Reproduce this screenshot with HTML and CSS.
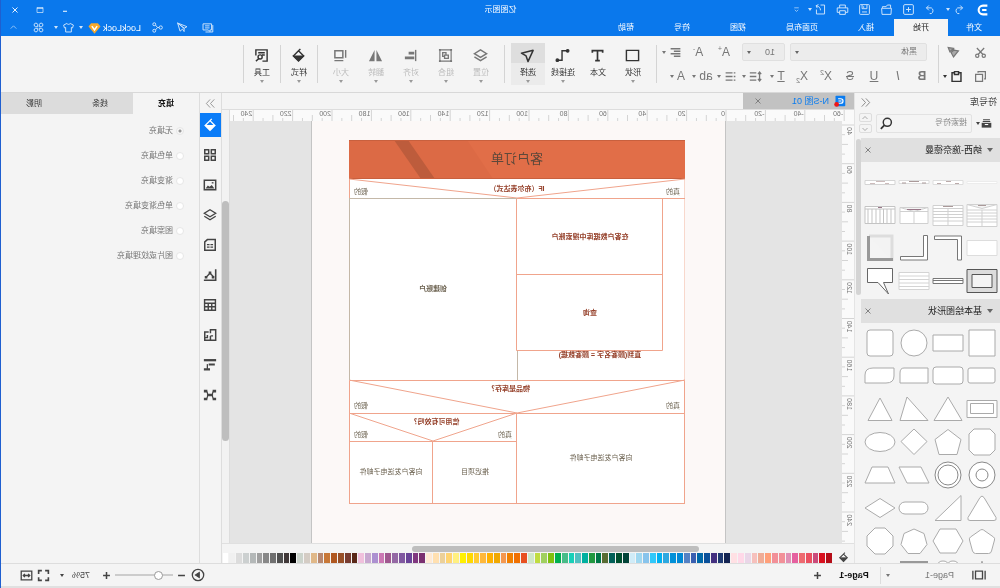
FILE: index.html
```html
<!DOCTYPE html>
<html lang="zh-CN">
<head>
<meta charset="utf-8">
<title>亿图图示</title>
<link rel="stylesheet" href="styles.css">
</head>
<body>
<svg class="sprite" aria-hidden="true">
  <symbol id="undo" viewBox="0 0 16 16"><path d="M6 3 3 6l3 3M3 6h6a4 4 0 0 1 0 7H7"/></symbol>
  <symbol id="redo" viewBox="0 0 16 16"><path d="m10 3 3 3-3 3M13 6H7a4 4 0 0 0 0 7h2"/></symbol>
  <symbol id="new" viewBox="0 0 16 16"><rect x="2" y="2" width="12" height="12" rx="1.500"/><path d="M8 5v6M5 8h6"/></symbol>
  <symbol id="open" viewBox="0 0 16 16"><path d="M3 6V2.500h4L8.500 4.500H13V6M2 6.500h12l-.5 7.500H2.500z"/></symbol>
  <symbol id="save" viewBox="0 0 16 16"><rect x="2" y="2" width="12" height="12" rx="1"/><path d="M5 2.500v4.500h6V2.500M9 4v2M5 11h6"/></symbol>
  <symbol id="print" viewBox="0 0 16 16"><path d="M4.500 6V2.500h7V6M4.500 11.500h-3v-5.500h13v5.500h-3M4.500 9.500h7v4.500h-7z"/></symbol>
  <symbol id="export" viewBox="0 0 16 16"><path d="M8 2.500H3v11h10V8M8 9c0-3 2-5 5-5.500M10.500 2l3 1.300-1.500 3"/></symbol>
  <symbol id="more" viewBox="0 0 16 16"><path d="M4 5h8M5 8.500l3 3 3-3"/></symbol>
  <symbol id="msg" viewBox="0 0 16 16"><path d="M3 3.500h10.500v7.500H7l-2 2v-2H3zM5.500 6h5.500M5.500 8.500h5.500M1.500 5v8.500h9"/></symbol>
  <symbol id="send" viewBox="0 0 16 16"><path d="M14 2.500 2.500 7 6 9zM14 2.500 11 12.500 8 10M6 9v4l2-3M6 9l8-6.500"/></symbol>
  <symbol id="share" viewBox="0 0 16 16"><circle cx="4" cy="8" r="2"/><circle cx="12" cy="4" r="1.800"/><circle cx="12" cy="12" r="1.800"/><path d="M6 8h2l2.500-3M8 8l2.500 3"/></symbol>
  <symbol id="shirt" viewBox="0 0 16 16"><path d="M6 3 2 5l1 3.500 1.500-.5v5.500h7V8l1.500.5L14 5l-4-2c-1 1.500-3 1.500-4 0z"/></symbol>
  <symbol id="apps" viewBox="0 0 16 16"><path d="M7 7H4.500A2.200 2.200 0 1 1 7 4.500zM9 7V4.500A2.200 2.200 0 1 1 11.500 7zM7 9v2.500A2.200 2.200 0 1 1 4.500 9zM9 9h2.500A2.200 2.200 0 1 1 9 11.500z"/></symbol>
  <symbol id="up" viewBox="0 0 16 16"><path d="m3 10 5-5 5 5"/></symbol>
  <symbol id="down" viewBox="0 0 16 16"><path d="m3 6 5 5 5-5"/></symbol>
  <symbol id="close" viewBox="0 0 16 16"><path d="m3 3 10 10M13 3 3 13" stroke-width="1.800"/></symbol>
  <symbol id="max" viewBox="0 0 16 16"><path d="M2 3h12v10H2zM2 5h12"/></symbol>
  <symbol id="min" viewBox="0 0 16 16"><path d="M4 10.500h8" stroke-width="2"/></symbol>
  <symbol id="cut" viewBox="0 0 16 16"><g stroke-width="1.500"><circle cx="4" cy="12" r="2"/><circle cx="12" cy="12" r="2"/><path d="M3.500 2.500 11 10.500M12.500 2.500 5 10.500"/></g></symbol>
  <symbol id="copy" viewBox="0 0 16 16"><path d="M5.500 5.500h8.500V14H5.500zM3.500 11H2V2h9v1.500" stroke-width="1.500"/></symbol>
  <symbol id="painter" viewBox="0 0 16 16"><path d="m8 3 6.500-1-2 5zM7 4l4.500 4.500M7.500 5 2 6l6 7.500 3-5.500z" fill="currentColor" fill-opacity=".6" stroke-width="1.500"/></symbol>
  <symbol id="paste" viewBox="0 0 16 16"><path d="M5 3.500H2.500V14h11V3.500H11M5.500 2h5v3.500h-5z" stroke-width="1.800"/></symbol>
  <symbol id="align" viewBox="0 0 16 16"><path d="M2 3.500h12M2 6.500h8M2 9.500h12M2 12.500h8" stroke-width="1.800"/></symbol>
  <symbol id="spacing" viewBox="0 0 16 16"><path d="M7 3.500h8M7 8h8M7 12.500h8M3 2.500v11M1 5l2-2.500L5 5M1 11l2 2.500L5 11" stroke-width="1.600"/></symbol>
  <symbol id="list" viewBox="0 0 16 16"><path d="M2 3.500h2M2 8h2M2 12.500h2M5.500 3.500H14M5.500 8H14M5.500 12.500H14" stroke-width="1.600"/></symbol>
  <symbol id="rect" viewBox="0 0 16 16"><path d="M1.500 2.500h13v11h-13z" stroke-width="1.500"/></symbol>
  <symbol id="text" viewBox="0 0 16 16"><path d="M2.500 5V2.800h11V5M8 3v10.500M5.500 13.500h5" stroke-width="1.800"/></symbol>
  <symbol id="connector" viewBox="0 0 16 16"><path d="M3 3h5.500v10H12" stroke-width="1.500"/><circle cx="2.500" cy="3" r="1.400" fill="currentColor"/><circle cx="13.500" cy="13" r="1.400" fill="currentColor"/></symbol>
  <symbol id="pointer" viewBox="0 0 16 16"><path d="M2 2.500 14.500 5.500 9.500 8.500 7.500 14.500z" stroke-width="1.600" stroke-linejoin="round"/></symbol>
  <symbol id="layers" viewBox="0 0 16 16"><path d="M8 2 1.500 6 8 10l6.500-4zM1.500 9.500l6.500 4 6.500-4" stroke-width="1.500"/></symbol>
  <symbol id="group" viewBox="0 0 16 16"><path d="M2 2h12v12H2z"/><path d="M5 7.500h4V11H5zM7.500 7.500V5H11v4H9" stroke-width="1.400"/><path d="M1 1h2v2H1zM13 1h2v2h-2zM1 13h2v2H1zM13 13h2v2h-2z" fill="currentColor" stroke="none"/></symbol>
  <symbol id="alignobj" viewBox="0 0 16 16"><path d="M2.500 2v12" stroke-width="1.500"/><path d="M4 4h6v3H4zM4 9h10v3H4z" fill="currentColor" stroke="none"/></symbol>
  <symbol id="flip" viewBox="0 0 16 16"><path d="M7 2v12H1zM9 2v12h6z" fill="currentColor" stroke="none"/></symbol>
  <symbol id="size" viewBox="0 0 16 16"><path d="M5.500 3H14v7.500H5.500z" stroke-width="1.600"/><path d="M2.500 2v8.500M5 13.500h9.500" stroke-width="1.500"/></symbol>
  <symbol id="bucket" viewBox="0 0 16 16"><path d="M8 3 2.500 8.500 8 14l5.500-5.500L8 3 6 1" stroke-width="1.500"/><path d="M3 8.500h10l-5 5z" fill="currentColor"/></symbol>
  <symbol id="tools" viewBox="0 0 16 16"><path d="M14 8V2H2v12h5M4.500 5h7M4.500 7.500h3" stroke-width="1.500"/><circle cx="9.500" cy="9.500" r="2.200" stroke-width="1.500"/><path d="m11 11.500 3 2.500" stroke-width="1.500"/></symbol>
  <symbol id="collapse" viewBox="0 0 16 16"><path d="M7.500 2 2 8l5.500 6M13.500 2 8 8l5.500 6"/></symbol>
  <symbol id="expand" viewBox="0 0 16 16"><path d="m2.500 2 5.500 6-5.500 6M8.500 2l5.500 6-5.500 6"/></symbol>
  <symbol id="drawer" viewBox="0 0 16 16"><path d="M3 2.500h10M2.500 5h11" stroke-width="1.500"/><path d="M1 7h14v7H1z" fill="currentColor" stroke="none"/><path d="M5.500 9.500h5" stroke="#fff" stroke-width="1.500"/></symbol>
  <symbol id="search" viewBox="0 0 16 16"><circle cx="7" cy="6.500" r="5" stroke-width="1.800"/><path d="m10.500 10 4.500 4.500" stroke-width="2.200"/></symbol>
  <symbol id="blocks" viewBox="0 0 16 16"><path d="M2 2h4.500v4.500H2zM9.500 2H14v4.500H9.500zM2 9.500h4.500V14H2zM9.500 9.500H14V14H9.500z" stroke-width="1.700"/></symbol>
  <symbol id="image" viewBox="0 0 16 16"><path d="M1.500 2.500h13v11h-13z" stroke-width="1.700"/><path d="m3 12 3-4 2.500 2 2-1.500L13 12z" fill="currentColor" stroke="none"/><path d="M4 5.500h2" stroke-width="1.500"/></symbol>
  <symbol id="note" viewBox="0 0 16 16"><path d="M2 1.800h9L14 4.500V14H2z" stroke-width="1.700"/><path d="M4.500 7.500h3M8.500 7.500h3M4.500 10.500h3M8.500 10.500h3" stroke-width="1.500"/></symbol>
  <symbol id="chart" viewBox="0 0 16 16"><path d="M1.500 1.500v12.500H15" stroke-width="1.800"/><path d="m4 10 4-4 4 4" stroke-width="1.500"/><path d="M6.500 4h3v3h-3zM3 9h3v3H3zM11 9h3v3h-3z" fill="currentColor" stroke="none"/></symbol>
  <symbol id="table" viewBox="0 0 16 16"><path d="M1.800 2h12.400v12H1.800zM1.800 6h12.400M1.800 10h12.400M6 6v8M10 6v8" stroke-width="1.600"/></symbol>
  <symbol id="plan" viewBox="0 0 16 16"><path d="M7.500 6V2H1.500v12H14V4.500H9.500M7.500 9v5M7.500 9H4.500M11 8v3h3" stroke-width="1.700"/></symbol>
  <symbol id="gantt" viewBox="0 0 16 16"><path d="M1 2.500h14" stroke-width="2.600"/><path d="M2.500 7.500h7M8 13h7" stroke-width="2.400"/><path d="M11 7v5.500" stroke-width="1.500"/></symbol>
  <symbol id="mind" viewBox="0 0 16 16"><path d="M3 3.500c3 0 3 9 0 9M13 3.500c-3 0-3 9 0 9M5 8h6" stroke-width="1.400"/><path d="M5.500 6.500h5v3h-5zM1 2h4v3H1zM11 2h4v3h-4zM1 11h4v3H1zM11 11h4v3h-4z" fill="currentColor" stroke="none"/></symbol>
  <symbol id="view" viewBox="0 0 16 16"><path d="M4 3.500h8v9H4zM1 3v10M15 3v10" stroke-width="1.500"/></symbol>
  <symbol id="play" viewBox="0 0 16 16"><circle cx="8" cy="8" r="6.500" stroke-width="1.500"/><path d="m6.500 5 4.500 3-4.500 3z" fill="currentColor"/></symbol>
  <symbol id="plus" viewBox="0 0 16 16"><path d="M8 3v10M3 8h10" stroke-width="2.200"/></symbol>
  <symbol id="minus" viewBox="0 0 16 16"><path d="M3 8h10" stroke-width="2.200"/></symbol>
  <symbol id="full" viewBox="0 0 16 16"><path d="M2 6V2h4M10 2h4v4M14 10v4h-4M6 14H2v-4" stroke-width="2"/></symbol>
  <symbol id="fit" viewBox="0 0 16 16"><path d="M1.500 2.500h13v11h-13zM4 8h8M6 6 4 8l2 2M10 6l2 2-2 2" stroke-width="1.600"/></symbol>
</svg>

<div class="app">
  <header class="titlebar">
    <nav class="quick" aria-label="快速访问">
      <svg class="logo" viewBox="0 0 16 16"><path d="M3 3h5a5 5 0 0 1 0 10H3M4 8h5" fill="none" stroke="#fff" stroke-width="2.400"/></svg>
      <button class="quick-btn split" aria-label="撤销"><svg class="icon"><use href="#undo"/></svg><i class="caret"></i></button>
      <button class="quick-btn" aria-label="恢复"><svg class="icon"><use href="#redo"/></svg></button>
      <button class="quick-btn" aria-label="新建"><svg class="icon"><use href="#new"/></svg></button>
      <button class="quick-btn" aria-label="打开"><svg class="icon"><use href="#open"/></svg></button>
      <button class="quick-btn" aria-label="保存"><svg class="icon"><use href="#save"/></svg></button>
      <button class="quick-btn" aria-label="打印"><svg class="icon"><use href="#print"/></svg></button>
      <button class="quick-btn split" aria-label="导出"><svg class="icon"><use href="#export"/></svg><i class="caret"></i></button>
      <button class="quick-btn slim" aria-label="更多"><svg class="icon small"><use href="#more"/></svg></button>
    </nav>
    <h1 class="app-title">亿图图示</h1>
    <div class="window-controls">
      <button class="win-btn" aria-label="最小化"><svg class="icon small"><use href="#min"/></svg></button>
      <button class="win-btn" aria-label="最大化"><svg class="icon small"><use href="#max"/></svg></button>
      <button class="win-btn" aria-label="关闭"><svg class="icon small"><use href="#close"/></svg></button>
    </div>
  </header>

  <div class="menubar">
    <nav class="menu" aria-label="菜单">
      <button class="menu-tab file">文件</button>
      <button class="menu-tab active">开始</button>
      <button class="menu-tab">插入</button>
      <button class="menu-tab">页面布局</button>
      <button class="menu-tab">视图</button>
      <button class="menu-tab">符号</button>
      <button class="menu-tab">帮助</button>
    </nav>
    <div class="account">
      <button class="acct-btn" aria-label="消息"><svg class="icon"><use href="#msg"/></svg></button>
      <button class="acct-btn" aria-label="发送"><svg class="icon"><use href="#send"/></svg></button>
      <button class="acct-btn" aria-label="分享"><svg class="icon"><use href="#share"/></svg></button>
      <button class="user">LockLock<svg class="gem" viewBox="0 0 16 16"><path d="M3.500 1.500h9L16 6l-8 9.500L0 6z" fill="#f7a92c"/><path d="m4.500 5.500 3.500 5 3.500-5" fill="none" stroke="#fff" stroke-width="2"/></svg><i class="caret"></i></button>
      <button class="acct-btn split" aria-label="皮肤"><svg class="icon"><use href="#shirt"/></svg><i class="caret"></i></button>
      <button class="acct-btn" aria-label="应用"><svg class="icon"><use href="#apps"/></svg></button>
      <button class="acct-btn" aria-label="收起功能区"><svg class="icon small"><use href="#up"/></svg></button>
    </div>
  </div>

  <section class="ribbon" aria-label="开始">
    <div class="clipboard">
      <button class="tool" aria-label="剪切"><svg class="icon mid"><use href="#cut"/></svg></button>
      <button class="tool split" aria-label="格式刷"><svg class="icon mid"><use href="#painter"/></svg></button>
      <button class="tool" aria-label="复制"><svg class="icon mid"><use href="#copy"/></svg></button>
      <button class="tool split dark" aria-label="粘贴"><svg class="icon mid"><use href="#paste"/></svg><i class="caret"></i></button>
    </div>
    <span class="sep"></span>
    <div class="font-group">
      <div class="tool-row fields">
        <label class="field family"><select aria-label="字体"><option>黑体</option></select><i class="caret"></i></label>
        <label class="field points"><select aria-label="字号"><option>10</option></select><i class="caret"></i></label>
        <button class="tool wide glyph" aria-label="增大字号">A<sup>+</sup></button>
        <button class="tool wide glyph" aria-label="减小字号">A<sup>-</sup></button>
        <button class="tool split" aria-label="对齐方式"><svg class="icon mid"><use href="#align"/></svg><i class="caret"></i></button>
      </div>
      <div class="tool-row">
        <button class="tool glyph"><b>B</b></button>
        <button class="tool glyph"><em>I</em></button>
        <button class="tool glyph"><u>U</u></button>
        <button class="tool glyph"><s>S</s></button>
        <button class="tool glyph" aria-label="上标">X<sup>2</sup></button>
        <button class="tool glyph" aria-label="下标">X<sub>2</sub></button>
        <button class="tool split glyph"><u>T</u><i class="caret"></i></button>
        <button class="tool split" aria-label="行距"><svg class="icon mid"><use href="#spacing"/></svg><i class="caret"></i></button>
        <button class="tool split" aria-label="列表"><svg class="icon mid"><use href="#list"/></svg><i class="caret"></i></button>
        <button class="tool split glyph">ab<i class="caret"></i></button>
        <button class="tool split glyph">A<i class="caret"></i></button>
      </div>
    </div>
    <span class="sep"></span>
    <div class="big-group">
      <button class="big"><svg class="icon"><use href="#rect"/></svg><span>形状</span><i class="caret"></i></button>
      <button class="big"><svg class="icon"><use href="#text"/></svg><span>文本</span></button>
      <button class="big"><svg class="icon"><use href="#connector"/></svg><span>连接线</span><i class="caret"></i></button>
      <button class="big selected"><svg class="icon"><use href="#pointer"/></svg><span>选择</span><i class="caret"></i></button>
    </div>
    <span class="sep"></span>
    <div class="big-group">
      <button class="big off"><svg class="icon"><use href="#layers"/></svg><span>位置</span><i class="caret"></i></button>
      <button class="big off"><svg class="icon"><use href="#group"/></svg><span>组合</span><i class="caret"></i></button>
      <button class="big off"><svg class="icon"><use href="#alignobj"/></svg><span>对齐</span><i class="caret"></i></button>
      <button class="big off"><svg class="icon"><use href="#flip"/></svg><span>翻转</span><i class="caret"></i></button>
      <button class="big off"><svg class="icon"><use href="#size"/></svg><span>大小</span><i class="caret"></i></button>
    </div>
    <span class="sep"></span>
    <button class="big single"><svg class="icon"><use href="#bucket"/></svg><span>样式</span><i class="caret"></i></button>
    <span class="sep"></span>
    <button class="big single"><svg class="icon"><use href="#tools"/></svg><span>工具</span><i class="caret"></i></button>
    <span class="sep"></span>
  </section>

  <main class="workspace">
    <aside class="library">
      <div class="library-head"><h2>符号库</h2><button aria-label="收起"><svg class="icon small"><use href="#collapse"/></svg></button></div>
      <div class="library-search">
        <button class="drawer" aria-label="符号库菜单"><svg class="icon small"><use href="#drawer"/></svg><i class="caret"></i></button>
        <label class="search-box"><input type="text" placeholder="搜索符号" aria-label="搜索符号"><svg class="icon mid"><use href="#search"/></svg></label>
        <div class="stepper"><button aria-label="上一个"><svg class="icon tiny"><use href="#up"/></svg></button><button aria-label="下一个"><svg class="icon tiny"><use href="#down"/></svg></button></div>
      </div>
      <div class="library-body">
        <div class="stencils">
          <h3 class="stencil-head"><i class="caret"></i><span>纳西-施奈德曼</span><button aria-label="关闭"><svg class="icon tiny"><use href="#close"/></svg></button></h3>
          <div class="shapes ns">
            <svg viewBox="0 0 32 32"><path d="M1 15.500h30v2H1z" stroke="#ececec"/></svg>
            <svg viewBox="0 0 32 32"><path d="M1 14.500h30v4H1z" stroke="#ddd"/><path d="M13 15.500h5M5 17.500h4M23 17.500h4" stroke="#baa"/></svg>
            <svg viewBox="0 0 32 32"><path d="M1 14.500h30v3H1z" stroke="#ddd"/><path d="M11 15.500h10M4 17h4M24 17h4" stroke="#a99"/></svg>
            <svg viewBox="0 0 32 32"><path d="M1 14.500h30v4H1z" stroke="#d4d4d4"/><path d="M11 15.500h9M7 17.500h4M21 17.500h5" stroke="#cbb"/></svg>
            <svg viewBox="0 0 32 32"><path d="M1 5.500h30v22H1zM1 11h30M1 14h30M1 17h30M1 20h30M1 23h30M16 11v16M1 5.500l15 4 15-4" stroke="#d0d0d0"/><path d="M12 6.500h8" stroke="#a99"/></svg>
            <svg viewBox="0 0 32 32"><path d="M1 6.500h30v20H1zM1 9.500h30M1 12.500h30M1 15.500h30M1 18.500h30M1 22h30M16 9v17" stroke="#d0d0d0"/><path d="M11 7.500h10" stroke="#a99"/></svg>
            <svg viewBox="0 0 32 32"><path d="M2 8.500h28v16H2zM2 12.500h28M2 8.500l14 4 14-4M16 12.500v12" stroke="#d0d0d0"/><path d="M9 10.500h14" stroke="#978"/></svg>
            <svg viewBox="0 0 32 32"><path d="M1 7.500h30v17H1zM1 10h30M5 10v14M9 10v14M12.500 10v14M16 10v14M20 10v14M24 10v14M28 10v14" stroke="#c4c4c4"/><path d="M14 8.500h4" stroke="#978"/></svg>
            <svg viewBox="0 0 32 32"><path d="M1 8.500h30v15H1z" stroke="#ddd"/></svg>
            <svg viewBox="0 0 32 32"><path d="M2.500 4h27v3.500h-23V28h-4z" stroke="#777"/></svg>
            <svg viewBox="0 0 32 32"><path d="M2.500 3.500h4v21h23V28h-27z" stroke="#777"/></svg>
            <svg viewBox="0 0 32 32"><path d="M4 29V4h23" fill="#f3f3f3" stroke="#ddd" stroke-width="3"/><path d="M3 27.500h24.500V4" fill="none" stroke="#999" stroke-width="3"/></svg>
            <svg viewBox="0 0 32 32"><path d="M1 4.500h30v23H1z" fill="#dcdcdc" stroke="#555"/><path d="M6 9.500h20v13H6z" fill="#f4f4f4" stroke="#555"/></svg>
            <svg viewBox="0 0 32 32"><path d="M1 13.500h30v5H1zM1 15.500h30" stroke="#777"/></svg>
            <svg viewBox="0 0 32 32"><path d="M1 7.500h30v17H1zM1 11h30M1 14.500h30M1 18h30M1 21.500h30" stroke="#d4d4d4"/></svg>
            <svg viewBox="0 0 32 32"><path d="M3.500 3.500h25v14H18L7.500 29l5-11.500h-9z" stroke="#666"/></svg>
          </div>
          <h3 class="stencil-head"><i class="caret"></i><span>基本绘图形状</span><button aria-label="关闭"><svg class="icon tiny"><use href="#close"/></svg></button></h3>
          <div class="shapes">
            <svg viewBox="0 0 32 32"><path d="M3 3h26v26H3z"/></svg>
            <svg viewBox="0 0 32 32"><path d="M1 8h30v16H1z"/></svg>
            <svg viewBox="0 0 32 32"><circle cx="16" cy="16" r="13"/></svg>
            <svg viewBox="0 0 32 32"><rect x="3" y="3" width="26" height="26" rx="3"/></svg>
            <svg viewBox="0 0 32 32"><rect x="3" y="8" width="27" height="15" rx="2"/></svg>
            <svg viewBox="0 0 32 32"><rect x="1" y="7" width="30" height="17" rx="3"/></svg>
            <svg viewBox="0 0 32 32"><path d="M2 8h24q4 0 4 5v10H2z"/></svg>
            <svg viewBox="0 0 32 32"><path d="M2 13q0 0 0-5h21q7 0 8 6v10H9q-7 0-7-6z" visibility="hidden"/><path d="M2 8h21q8 0 8 7v8H10q-8 0-8-7z"/></svg>
            <svg viewBox="0 0 32 32"><path d="M1 7.500h30v17H1zM4.500 10.500h23v10h-23z"/></svg>
            <svg viewBox="0 0 32 32"><path d="m16 4 14 23.500H2z"/></svg>
            <svg viewBox="0 0 32 32"><path d="m23 4 7 23.500H2z"/></svg>
            <svg viewBox="0 0 32 32"><path d="m16 5 12 22.500H4z"/></svg>
            <svg viewBox="0 0 32 32"><path d="M8 3h16l5 5v16l-5 5H8l-5-5V8z"/></svg>
            <svg viewBox="0 0 32 32"><path d="m16 3.500 13 10-4 15H7l-4-15z"/></svg>
            <svg viewBox="0 0 32 32"><path d="m16 3 13 12.500L16 28.500 3 15.500z"/></svg>
            <svg viewBox="0 0 32 32"><ellipse cx="16" cy="16" rx="15" ry="9.500"/></svg>
            <svg viewBox="0 0 32 32" class="bold"><circle cx="16" cy="16" r="13"/><circle cx="16" cy="16" r="6"/></svg>
            <svg viewBox="0 0 32 32" class="bold"><circle cx="16" cy="16" r="13"/><circle cx="16" cy="16" r="10"/></svg>
            <svg viewBox="0 0 32 32"><path d="M9 8h22l-8 16H1z"/></svg>
            <svg viewBox="0 0 32 32"><path d="M8 8h16l7 16H1z"/></svg>
            <svg viewBox="0 0 32 32"><path d="M14 5.500q2-3 4 0l12 20q1 3-2 3H4q-3 0-2-3z"/></svg>
            <svg viewBox="0 0 32 32"><path d="M3 3.500v25h26z"/></svg>
            <svg viewBox="0 0 32 32"><rect x="2" y="10" width="29" height="12" rx="6"/></svg>
            <svg viewBox="0 0 32 32"><path d="m16 6.500 15 9.500-15 9.500L1 16z"/></svg>
            <svg viewBox="0 0 32 32"><path d="M14.500 5q1.500-1 3 0l10 7q1.500 1 1 3l-3 11q-1 2.500-3 2.500H9.500Q7 28.500 6.500 26l-3-11q-.5-2 1-3z"/></svg>
            <svg viewBox="0 0 32 32"><path d="M8 4h16l7 12-7 12H8L1 16z"/></svg>
            <svg viewBox="0 0 32 32"><path d="m16 4 10 4.500 3 11-7 9H10l-7-9 3-11z"/></svg>
            <svg viewBox="0 0 32 32"><path d="M11 3h10l8 8v10l-8 8H11l-8-8V11z"/></svg>
            <svg viewBox="0 0 32 32"><path d="m16 3 3 9h10l-8 6 3 10-8-6-8 6 3-10-8-6h10z"/></svg>
            <svg viewBox="0 0 32 32"><path d="M6 28V7q0-4 5-4t5 4q0-4 5-4t5 4v21z"/></svg>
            <svg viewBox="0 0 32 32"><path d="M3 4h26v24H3z" stroke="#999" stroke-width="2"/></svg>
          </div>
        </div>
        <div class="thumb-track"><span class="library-thumb"></span></div>
      </div>
    </aside>

    <section class="editor">
      <div class="doc-tabs">
        <div class="doc-tab">
          <svg class="doc-icon" viewBox="0 0 16 16"><rect x="1" y="1" width="13" height="14" rx="1" fill="#0a7cf0"/><path d="M10.500 5H7a3 3 0 0 0 0 6h3.500M6 8h4" fill="none" stroke="#fff" stroke-width="1.600"/><circle cx="12.500" cy="12.500" r="3.200" fill="#f01818"/></svg>
          <button class="doc-name">N-S图 01</button>
          <button class="doc-close" aria-label="关闭文档"><svg class="icon tiny"><use href="#close"/></svg></button>
        </div>
      </div>
      <div class="stage">
        <svg class="ruler-x" id="rulerX"></svg>
        <svg class="ruler-y" id="rulerY"></svg>
        <div class="canvas">
          <div class="paper">
            <svg class="diagram" width="337" height="365" viewBox="0 0 337 365" role="img" aria-label="客户订单">
              <path d="M0 0h336v364H0z" fill="#fff"/>
              <path d="M0 0h336v39H0z" fill="#e16e48"/>
              <path d="M218 0h118v39H192z" fill="#dc6a45"/>
              <path d="M277 0h14l-27 39h-14z" fill="#bd5c3c"/>
              <path d="M0 .5h336M0 38.500h336" stroke="#c8603e" fill="none"/>
              <g fill="none" stroke="#f0a48c">
                <path d="M.5 39v201M335.500 273v90" stroke="#f8d8cc"/>
                <path d="M335.500 39v20M0 39l168 19 168-19M0 58.500h168M22.500 58.500H168.500v152H22.500zM22.500 134.500h146"/>
                <path d="M.5 240.500h335v33H.5zM0 240l168 33 168-33M168.500 273.500h167v28h-167zM168 273l84 28 84-28M.5 273v90M168.500 301v62M252.500 301v62M335.500 301v62M0 363.500h336"/>
                <path d="M168 58.500h168M335.500 58v182M167.500 211v29" stroke="#c4b8a8"/>
              </g>
              <text class="d-title" x="168" y="23">客户订单</text>
              <g class="d-strong">
                <text x="168" y="51">IF（布尔表达式）</text>
                <text x="95" y="99">在客户数据库中搜索账户</text>
                <text x="95" y="175">查询</text>
                <text x="85" y="217">直到(顾客名字 = 顾客数据)</text>
                <text x="176" y="251">物品是库存？</text>
                <text x="250" y="284">信用可有效吗？</text>
              </g>
              <g class="d-text">
                <text x="12" y="54">真的</text>
                <text x="324" y="54">假的</text>
                <text x="252" y="151" class="d-mid">创建账户</text>
                <text x="12" y="268">真的</text>
                <text x="324" y="268">假的</text>
                <text x="180" y="297">真的</text>
                <text x="324" y="297">假的</text>
                <text x="84" y="320">向客户发送电子邮件</text>
                <text x="210" y="334">推迟项目</text>
                <text x="294" y="334">向客户发送电子邮件</text>
              </g>
            </svg>
          </div>
        </div>
        <div class="scroll-y"><span></span></div>
      </div>
      <div class="scroll-x"><span></span></div>
      <div class="palette"><svg class="icon small"><use href="#bucket"/></svg><div class="swatches" id="swatches"></div></div>
    </section>

    <nav class="side-tools" aria-label="侧边栏">
      <button class="fold" aria-label="展开"><svg class="icon small"><use href="#expand"/></svg></button>
      <button class="on" aria-label="填充"><svg class="icon"><use href="#bucket"/></svg></button>
      <button aria-label="符号"><svg class="icon"><use href="#blocks"/></svg></button>
      <button aria-label="图片"><svg class="icon"><use href="#image"/></svg></button>
      <button aria-label="图层"><svg class="icon"><use href="#layers"/></svg></button>
      <button aria-label="注释"><svg class="icon"><use href="#note"/></svg></button>
      <button aria-label="图表"><svg class="icon"><use href="#chart"/></svg></button>
      <button aria-label="表格"><svg class="icon"><use href="#table"/></svg></button>
      <button aria-label="平面图"><svg class="icon"><use href="#plan"/></svg></button>
      <button aria-label="甘特图"><svg class="icon"><use href="#gantt"/></svg></button>
      <button aria-label="思维导图"><svg class="icon"><use href="#mind"/></svg></button>
    </nav>

    <aside class="props">
      <div class="prop-tabs"><button class="active">填充</button><button>线条</button><button>阴影</button></div>
      <form class="fills">
        <label><input type="radio" name="fill" checked>无填充</label>
        <label><input type="radio" name="fill">单色填充</label>
        <label><input type="radio" name="fill">渐变填充</label>
        <label><input type="radio" name="fill">单色渐变填充</label>
        <label><input type="radio" name="fill">图案填充</label>
        <label><input type="radio" name="fill">图片或纹理填充</label>
      </form>
    </aside>
  </main>

  <footer class="statusbar">
    <button class="view" aria-label="页面视图"><svg class="icon"><use href="#view"/></svg></button>
    <label class="page-pick"><select aria-label="页面"><option>Page-1</option></select><i class="caret"></i></label>
    <button class="page-tab">Page-1</button>
    <button class="add" aria-label="添加页面"><svg class="icon small"><use href="#plus"/></svg></button>
    <div class="zoom">
      <button aria-label="播放"><svg class="icon"><use href="#play"/></svg></button>
      <button aria-label="缩小"><svg class="icon small"><use href="#minus"/></svg></button>
      <input type="range" min="0" max="100" value="20" aria-label="缩放">
      <button aria-label="放大"><svg class="icon small"><use href="#plus"/></svg></button>
      <button class="percent">75%<i class="caret"></i></button>
      <button aria-label="全屏"><svg class="icon mid"><use href="#full"/></svg></button>
      <button aria-label="适合宽度"><svg class="icon mid"><use href="#fit"/></svg></button>
    </div>
  </footer>
</div>
<script src="app.js"></script>
</body>
</html>
```

FILE: styles.css
```css
* { box-sizing: border-box; }

body {
  margin: 0;
  background: #f4f4f4;
  color: #333;
  font: 8px/12px "Liberation Sans", "Noto Sans CJK SC", sans-serif;
}

button, input, select { font: inherit; color: inherit; margin: 0; }
button { padding: 0; border: 0; background: none; display: flex; align-items: center; justify-content: center; }
h1, h2, h3 { margin: 0; font: inherit; }

.sprite { position: absolute; width: 0; height: 0; }

/* The whole interface is shown as a mirror image. */
.app {
  display: flex;
  flex-direction: column;
  height: 100vh;
  min-height: 480px;
  overflow: hidden;
  border-right: 1px solid #1f5fd0;
  transform: scaleX(-1);
}

.icon { width: 14px; height: 14px; flex: none; fill: none; stroke: currentColor; stroke-width: 1.2; }
.icon.mid { width: 13px; height: 13px; }
.icon.small { width: 11px; height: 11px; }
.icon.tiny { width: 8px; height: 8px; }
.caret { flex: none; border: 2px solid transparent; border-top: 3px solid currentColor; border-bottom: 0; }

/* Title bar */
.titlebar, .menubar { display: flex; background: #0a78ec; color: #fff; flex: none; }
.titlebar { display: grid; grid-template-columns: 1fr auto 1fr; height: 19px; }
.quick, .window-controls, .account, .menu { display: flex; align-items: center; }
.quick .icon, .account .icon { width: 13px; height: 13px; opacity: .8; }
.quick .icon.small, .account .icon.small { width: 9px; height: 9px; }
.logo { width: 14px; height: 14px; margin: 0 6px 0 10px; }
.quick-btn { width: 22px; height: 18px; }
.quick-btn.split { width: 28px; gap: 2px; }
.quick-btn.slim { width: 14px; }
.quick .caret, .account .caret { opacity: .8; }
.app-title { line-height: 19px; }
.window-controls { justify-content: flex-end; padding-right: 2px; }
.win-btn { width: 25px; height: 18px; }
.win-btn .icon { width: 8px; height: 8px; }

.menubar { height: 17px; justify-content: space-between; }
.menu-tab { height: 17px; padding: 0 20px; }
.menu-tab.file { padding: 0 18px; }
.menu-tab.active { padding: 0 19px; background: #f4f4f4; color: #222; }
.acct-btn { width: 25px; height: 16px; }
.acct-btn.split { width: 28px; gap: 4px; }
.user { gap: 2px; font-size: 9px; padding-left: 4px; }
.gem { width: 13px; height: 12px; }
.user .caret { margin-left: 3px; }

/* Ribbon */
.ribbon {
  display: flex;
  align-items: center;
  flex: none;
  height: 57px;
  border-bottom: 1px solid #d8d8d8;
  background: #f4f4f4;
}
.sep { width: 1px; height: 38px; background: #d4d4d4; flex: none; }
.clipboard { display: grid; grid-template-columns: 30px 27px; padding-left: 4px; color: #777; }
.tool { height: 24px; width: 24px; }
.clipboard .tool { width: auto; }
.tool.wide { width: 26px; }
.tool.split { width: 25px; gap: 3px; color: #777; }
.tool.split.dark { color: #333; }
.font-group { width: 281px; color: #777; }
.tool-row { display: flex; align-items: center; height: 24px; padding-left: 4px; }
.tool-row.fields { padding-left: 11px; }
.glyph { font-size: 12px; line-height: 14px; }
.glyph sup, .glyph sub { font-size: 7px; line-height: 7px; }
.glyph sup { align-self: flex-start; margin-top: 5px; }
.glyph sub { align-self: flex-end; margin-bottom: 4px; }
.field { position: relative; display: flex; align-items: center; margin-right: 5px; height: 18px; border: 1px solid #e0e0e0; border-radius: 2px; background: #ececec; }
.field.family { width: 137px; }
.field.points { width: 43px; font-size: 9px; }
.field select, .page-pick select { appearance: none; width: 100%; border: 0; background: none; outline: 0; }
.field select { padding: 0 9px; height: 16px; }
.field .caret { position: absolute; right: 4px; color: #666; }

.big-group { display: flex; gap: 1px; padding: 0 6px; }
.big { flex-direction: column; justify-content: flex-start; width: 34px; height: 42px; padding-top: 5px; color: #333; }
.big .icon { width: 15px; height: 15px; }
.big span { margin-top: 4px; white-space: nowrap; }
.big .caret { color: #999; margin-top: 1px; }
.big.off { color: #bbb; }
.big.off .icon { color: #777; }
.big.single { width: 36px; }
.big.selected { background: linear-gradient(#dedede 20px, #ebebeb 20px); }

/* Workspace */
.workspace { display: grid; grid-template-columns: 146px 1fr 23px 198px; flex: 1; min-height: 0; }

.library { display: flex; flex-direction: column; min-height: 0; background: #f4f4f4; border-right: 1px solid #e4e4e4; }
.library-head { display: flex; justify-content: space-between; align-items: center; height: 18px; padding: 0 5px 0 3px; font-size: 9px; color: #444; }
.library-head .icon { color: #777; }
.library-search { display: flex; align-items: center; gap: 4px; padding: 1px 4px 4px 8px; height: 27px; }
.drawer { gap: 1px; width: 16px; color: #444; }
.search-box { display: flex; align-items: center; flex: 1; min-width: 0; height: 19px; padding: 0 3px 0 4px; border: 1px solid #e2e2e2; border-radius: 2px; color: #333; }
.search-box input { width: 100%; min-width: 0; padding: 0; border: 0; background: none; outline: 0; }
.search-box input::placeholder { color: #888; }
.stepper { display: flex; flex-direction: column; gap: 2px; }
.stepper button { width: 13px; height: 9px; border: 1px solid #ddd; border-radius: 2px; color: #777; }
.library-body { display: flex; flex: 1; min-height: 0; overflow: hidden; }
.stencils { flex: 1; overflow: hidden; }
.stencil-head { display: flex; align-items: center; gap: 5px; height: 24px; padding: 0 3px 0 7px; background: #e0e0e0; color: #222; font-size: 9px; }
.stencil-head .caret { border-width: 4px 3px 0; color: #666; }
.stencil-head button { margin-left: auto; color: #777; }
.shapes { display: grid; grid-template-columns: repeat(4, 34px); grid-auto-rows: 33px; justify-items: center; align-items: center; padding: 3px 0 0 1px; }
.shapes.ns { padding-bottom: 2px; }
.shapes svg { width: 32px; height: 32px; fill: #fff; stroke: #aaa; }
.shapes .bold { stroke: #888; }
.thumb-track { width: 6px; padding-top: 1px; }
.library-thumb { display: block; width: 5px; height: 156px; border-radius: 3px; background: #d4d4d4; }

.editor { display: flex; flex-direction: column; min-width: 0; min-height: 0; }
.doc-tabs { height: 17px; flex: none; background: #f4f4f4; border-bottom: 1px solid #ddd; }
.doc-tab { display: flex; align-items: center; width: 111px; height: 16px; padding: 0 11px 0 8px; background: #c2c2c2; color: #0a7cf0; }
.doc-icon { width: 12px; height: 12px; margin-right: 5px; }
.doc-name { font-size: 9px; }
.doc-close { margin-left: auto; color: #777; }
.stage { display: grid; grid-template-columns: 12px 1fr 8px; grid-template-rows: 11px 1fr; flex: 1; min-height: 0; }
.ruler-x { grid-column: 1 / 3; width: 100%; height: 11px; background: #fafafa; }
.ruler-y { grid-row: 2; width: 12px; height: 100%; min-height: 0; background: #fafafa; }
.ruler-x line, .ruler-y line { stroke: #d4d4d4; }
.ruler-x text, .ruler-y text { font-size: 7px; fill: #777; }
.canvas { grid-column: 2; grid-row: 2; overflow: hidden; min-width: 0; background: #e4e4e4; }
.paper { width: 415px; height: 100%; margin-left: 116px; padding: 19px 0 0 40px; overflow: hidden; background: #fcf8f7; border: solid #c4c4c4; border-width: 0 1px; }
.diagram { display: block; }
.diagram text { text-anchor: middle; }
.d-title { font-size: 13px; fill: #5d483a; }
.d-strong { font-size: 7px; font-weight: bold; fill: #95402a; }
.d-text { font-size: 7px; fill: #6c6250; }
.d-mid { font-weight: bold; }
.scroll-y { grid-column: 3; grid-row: 1 / 3; padding-top: 91px; background: #f2f2f2; border-left: 1px solid #ddd; }
.scroll-y span { display: block; width: 7px; height: 240px; border-radius: 4px; background: #bebebe; }
.scroll-x { height: 9px; flex: none; padding: 2px 0 0 155px; background: #f4f4f4; border-top: 1px solid #e0e0e0; }
.scroll-x span { display: block; width: 287px; height: 6px; border-radius: 3px; background: #bebebe; }
.palette { display: flex; align-items: center; height: 11px; flex: none; padding-left: 5px; color: #444; }
.swatches { display: flex; flex: 1; gap: 1px; height: 10px; margin-left: 6px; }
.swatches span { flex: 1; }

.side-tools { display: flex; flex-direction: column; background: #f4f4f4; border-left: 1px solid #ddd; border-right: 1px solid #ddd; color: #444; }
.side-tools button { height: 24px; margin-bottom: 6px; }
.side-tools .fold { height: 20px; margin: 0; color: #888; }
.side-tools .on { background: #0a7cf8; color: #fff; }

.props { background: #f4f4f4; }
.prop-tabs { display: grid; grid-template-columns: repeat(3, 1fr); height: 21px; background: #dcdcdc; color: #333; }
.prop-tabs .active { background: #f4f4f4; color: #111; font-weight: bold; }
.fills { display: flex; flex-direction: column; gap: 13px; padding: 11px 15px; color: #777; }
.fills label { display: flex; align-items: center; gap: 3px; }
.fills input { appearance: none; width: 8px; height: 8px; border: 1px solid #e6e6e6; border-radius: 50%; background: #fff; }
.fills input:checked { background: radial-gradient(#999 1px, #f8f8f8 2px); }

/* Status bar */
.statusbar { display: flex; align-items: center; height: 25px; flex: none; border-top: 1px solid #ddd; border-bottom: 2px solid #e0e0e0; background: #f4f4f4; color: #444; }
.view { width: 42px; }
.page-pick { display: flex; align-items: center; width: 78px; height: 17px; padding: 0 5px 0 4px; border-right: 1px solid #ddd; font-size: 9px; color: #777; }
.page-pick select { padding: 0; }
.page-tab { width: 52px; font-size: 9px; font-weight: bold; color: #111; }
.add { width: 20px; }
.zoom { display: flex; align-items: center; margin-left: auto; padding-right: 17px; }
.zoom button { width: 17px; }
.zoom .percent { width: 46px; gap: 8px; font-size: 9px; }
.zoom input { appearance: none; width: 58px; height: 10px; background: linear-gradient(#ccc, #ccc) center / 100% 2px no-repeat; outline: 0; }
.zoom input::-webkit-slider-thumb { appearance: none; width: 9px; height: 9px; border: 1px solid #999; border-radius: 50%; background: #fff; }
```

FILE: app.js
```js
const NS = 'http://www.w3.org/2000/svg';

function add(parent, tag, attrs, text) {
  const node = document.createElementNS(NS, tag);
  for (const key in attrs) node.setAttribute(key, attrs[key]);
  if (text !== undefined) node.textContent = text;
  parent.appendChild(node);
}

// Horizontal ruler: 20 units every 39.4px, zero at the paper's left edge.
const rx = document.getElementById('rulerX');
for (let i = -3; i <= 12; i++) {
  const x = 128 + i * 39.4;
  add(rx, 'line', { x1: x, x2: x, y1: 0, y2: 11 });
  for (const q of [1, 2, 3]) {
    const m = x + q * 9.85;
    add(rx, 'line', { x1: m, x2: m, y1: q === 2 ? 5 : 8, y2: 11 });
  }
  add(rx, 'text', { x: x + 1, y: 6 }, i * 20);
}

// Vertical ruler
const ry = document.getElementById('rulerY');
for (let i = 0; i <= 10; i++) {
  const y = 4 + i * 38.7;
  add(ry, 'line', { x1: 0, x2: 12, y1: y, y2: y });
  for (const q of [1, 2, 3]) {
    const m = y + q * 9.7;
    add(ry, 'line', { x1: q === 2 ? 6 : 9, x2: 12, y1: m, y2: m });
  }
  const label = 40 + i * 20;
  const end = y + (label > 99 ? 14 : 10);
  add(ry, 'text', { transform: `translate(7 ${end}) rotate(-90)` }, label);
}

const colors = `b50d18 d9101e cb4b7a ea5060 ee6a70 e5609f e090b5 f29098 f29098 ffa07a f0ac96 f6c0bc ead6e8 ffd8e8 ffe0e4
142452 203a72 443080 0a509a 0068a8 3a5fb0 5582c4 0088d4 0090d8 2ca8e0 00b0f0 30c8fa 88c4ec a0d8f0 d0ecf8
024438 005030 006058 586c34 007848 209840 00b0a0 50c0c0 18d0b8 48bc88 00b050 80c010 a0d060 c0dc40 d0e8c8
e85020 f07000 f08000 f49850 f0a800 ffb000 ffb83a ffcc30 ffd800 fff000 fff080 ffd470 ecd098 ffe0b0 ffead4
7a3070 803880 6a4498 8058a0 9468a4 a05890 cc78b4 ac90d0 c8a8d0 f0c0dc 5a2818 783c30 985028 b05820 c87838
b88870 e0b888 d4ccc4 ccd4cc 000000 403838 505050 707070 888888 a0a0a0 b4b8b8 ccd0d0 dcdcdc f0f0f0 ffffff`.split(/\s+/);

const swatches = document.getElementById('swatches');
for (const c of colors) {
  const chip = document.createElement('span');
  chip.style.background = '#' + c;
  swatches.appendChild(chip);
}
```
